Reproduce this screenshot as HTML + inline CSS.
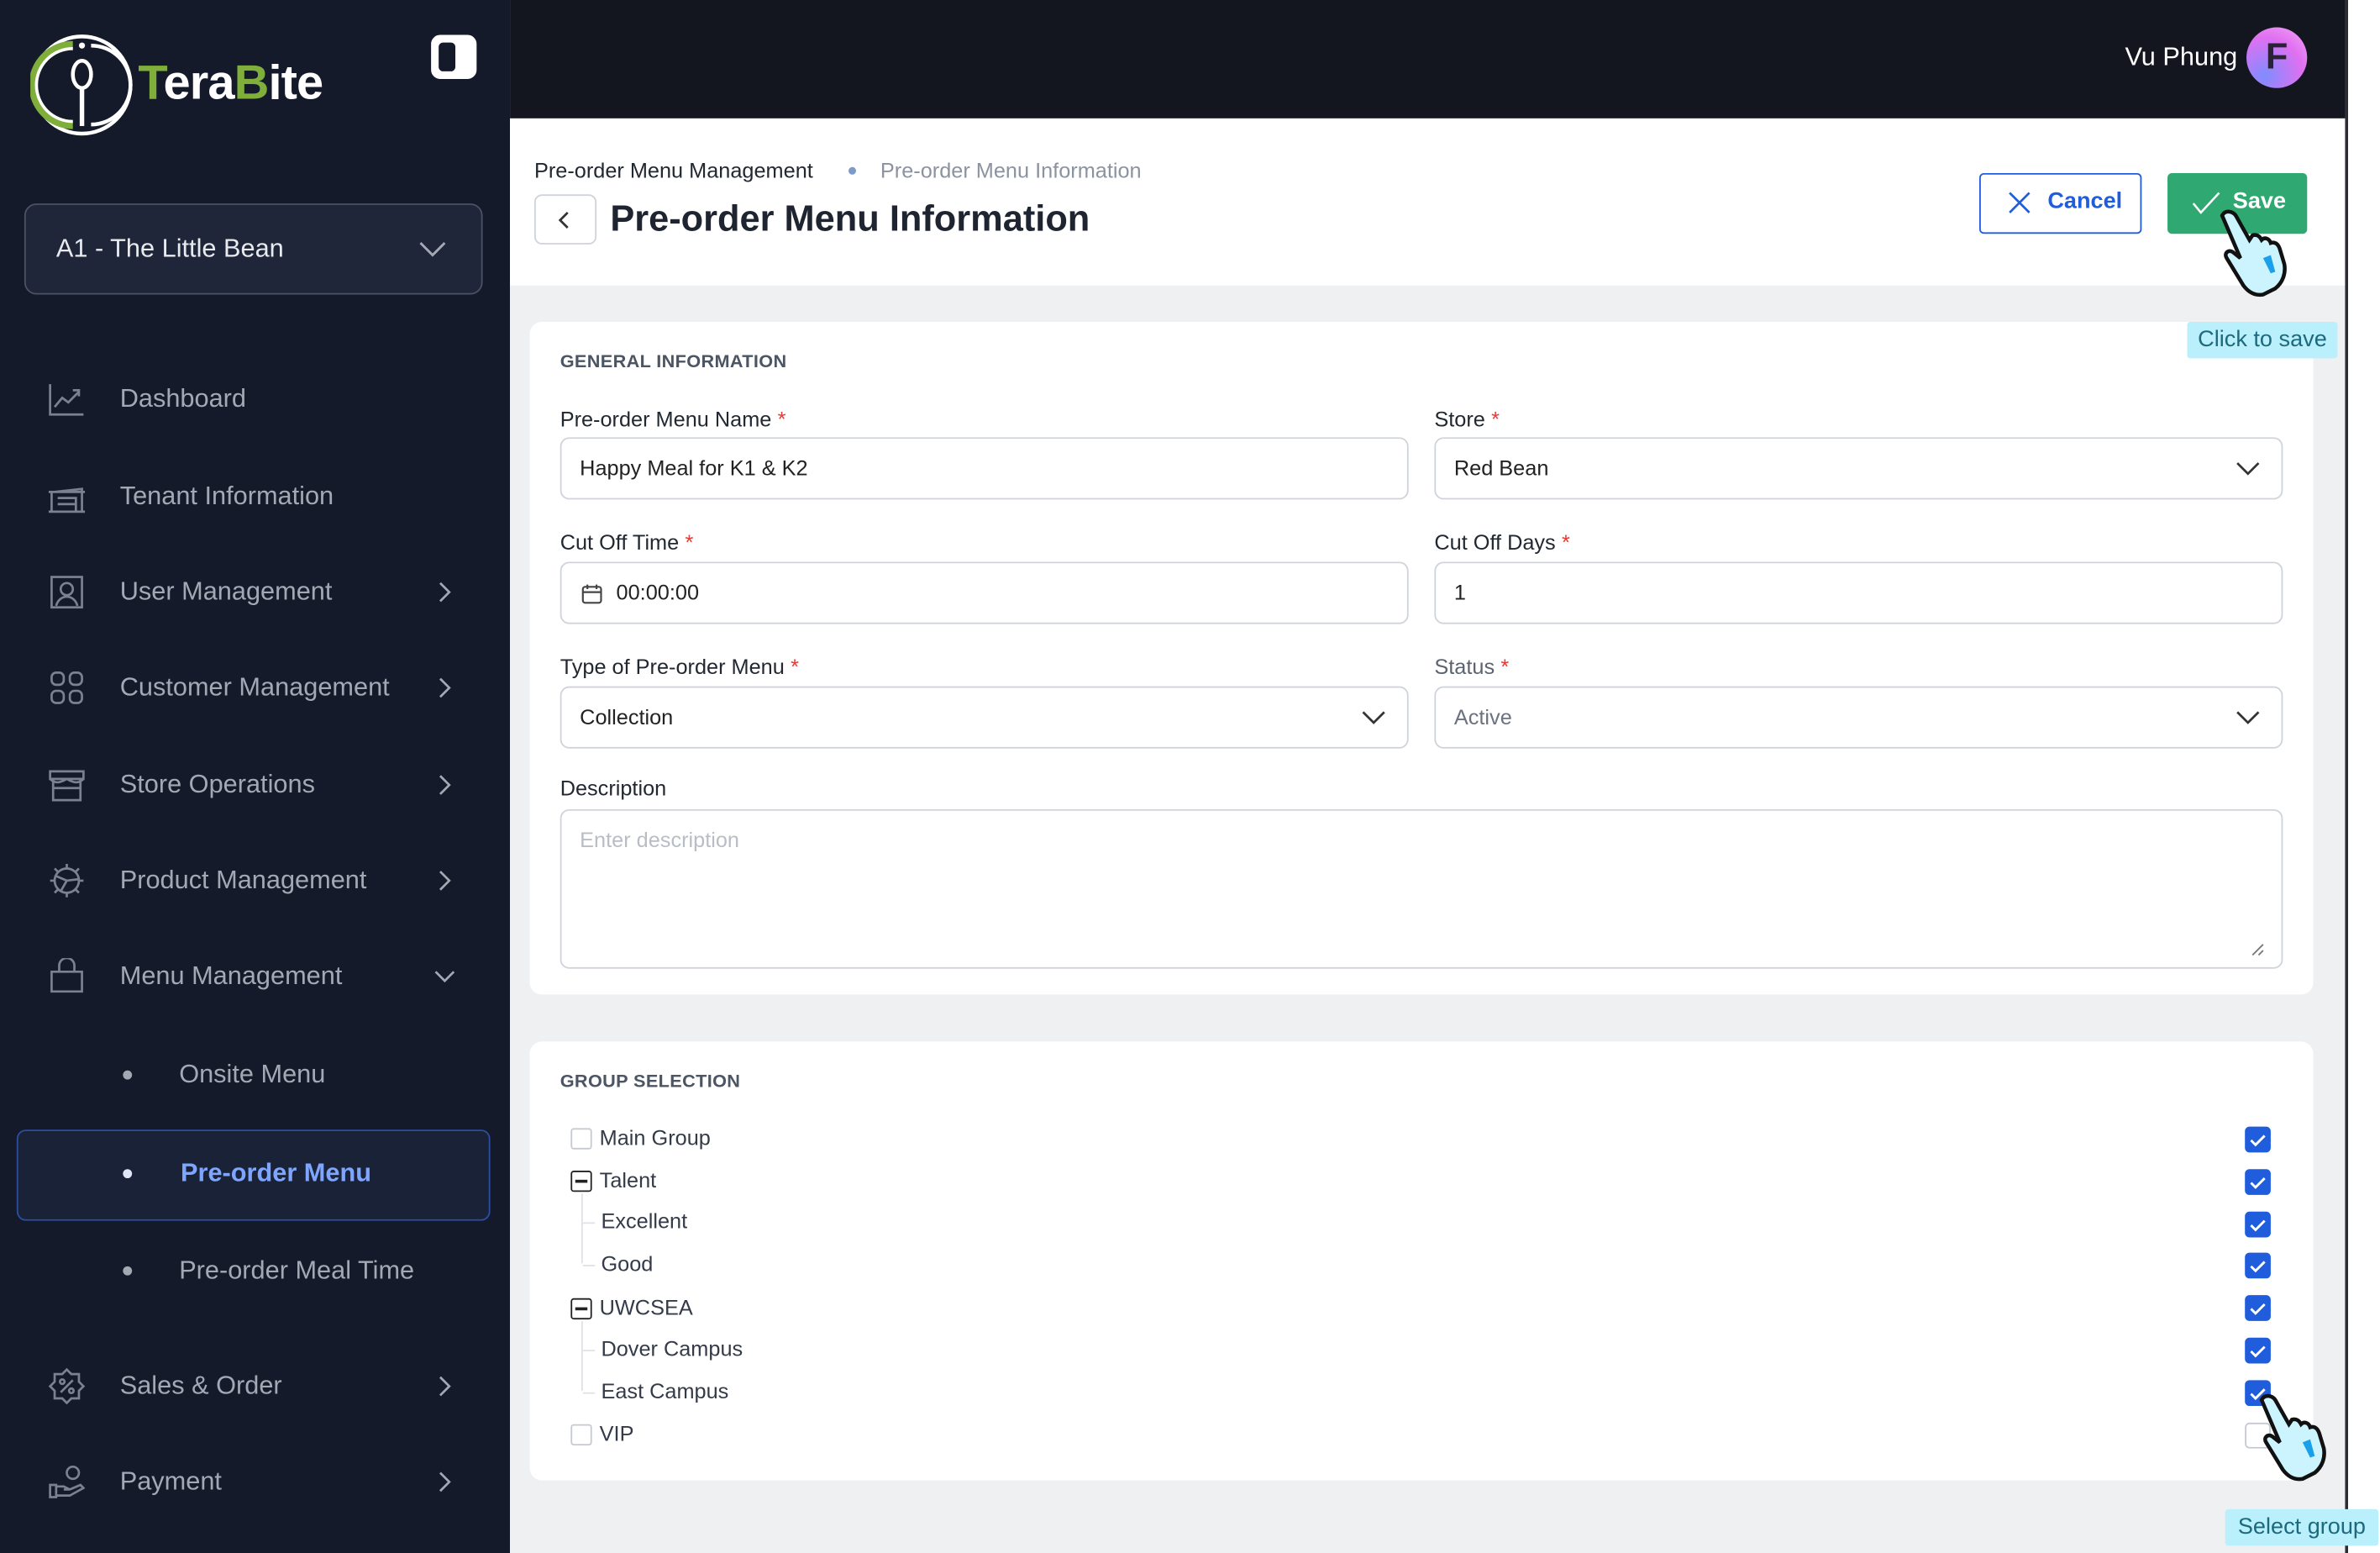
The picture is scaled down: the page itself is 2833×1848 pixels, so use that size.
<!DOCTYPE html>
<html><head><meta charset="utf-8"><style>
*{box-sizing:border-box;margin:0;padding:0}
html,body{width:2833px;height:1848px;overflow:hidden;background:#fff}
#w{position:absolute;left:0;top:0;width:1568px;height:1023px;transform:scale(1.80676);transform-origin:0 0;font-family:"Liberation Sans",sans-serif}
.a{position:absolute}
.side{left:0;top:0;width:336px;height:1023px;background:#151a2b}
.nav{position:absolute;left:79px;font-size:17px;color:#a3a9b4;transform:translateY(-50%)}
.ic{position:absolute;left:32px;width:24px;height:24px;transform:translateY(-50%)}
.chev{position:absolute;left:286px;width:14px;height:14px;transform:translateY(-50%)}
.dot{position:absolute;left:81px;width:6px;height:6px;border-radius:3px;background:#a3a9b4}
.lbl{position:absolute;font-size:14px;color:#222831}
.lbl b{color:#e53935;font-weight:normal;margin-left:4px}
.inp{position:absolute;height:41px;border:1px solid #cfd3da;border-radius:6px;font-size:14px;color:#222;padding-left:12px;line-height:39px;background:#fff}
.card{position:absolute;left:349px;width:1175px;background:#fff;border-radius:8px}
.ht{position:absolute;font-size:12px;font-weight:bold;color:#4b5563;letter-spacing:.2px}
.tr{position:absolute;font-size:14px;color:#333b48}
.cb{position:absolute;left:376px;width:14px;height:14px;border:1px solid #c5cad2;border-radius:2px;background:#fff}
.cm{position:absolute;left:376px;width:14px;height:14px;border:1.5px solid #222;border-radius:2px}
.cm:after{content:"";position:absolute;left:2px;right:2px;top:5px;height:1.5px;background:#222}
.ck{position:absolute;left:1479px;width:17px;height:17px;border-radius:3px;background:#1f5ddc}
.vl{position:absolute;left:383px;width:1px;background:#dfe2e7}
.hl{position:absolute;left:384px;width:8px;height:1px;background:#dfe2e7}
</style></head><body><div id="w">
<div class="a side"></div>
<!-- logo -->
<svg class="a" style="left:20px;top:22px" width="70" height="68" viewBox="0 0 70 68">
<circle cx="34" cy="34" r="32" fill="none" stroke="#fff" stroke-width="2.5"/>
<path d="M28 8 A26 26 0 0 0 28 60" fill="none" stroke="#7fae3a" stroke-width="6"/>
<path d="M40 8 A26 26 0 0 1 40 60" fill="none" stroke="#fff" stroke-width="2.5"/>
<path d="M28 10 A24 24 0 0 0 28 58" fill="none" stroke="#fff" stroke-width="2"/>
<ellipse cx="34" cy="27" rx="6" ry="9" fill="none" stroke="#fff" stroke-width="2.5"/>
<rect x="32.5" y="35" width="3" height="26" fill="#fff"/>
<circle cx="34" cy="8" r="2" fill="#fff"/>
</svg>
<div class="a" style="left:91px;top:36px;font-size:32px;font-weight:bold;color:#fff;letter-spacing:-0.5px"><span style="color:#7fae3a">T</span>era<span style="color:#7fae3a">B</span>ite</div>
<div class="a" style="left:284px;top:23px;width:30px;height:29px;border:4px solid #fff;border-radius:6px;background:#fff"><div style="position:absolute;left:1px;top:1px;width:11px;height:19px;background:#151a2b;border-radius:3px"></div></div>
<div class="a" style="left:16px;top:134px;width:302px;height:60px;border:1px solid #4a5264;border-radius:8px;background:#20263a"></div>
<div class="a" style="left:37px;top:154px;font-size:17px;color:#e8eaee">A1 - The Little Bean</div>
<svg class="a" style="left:275px;top:157px" width="20" height="14"><path d="M2 3l8 8 8-8" fill="none" stroke="#a3a9b4" stroke-width="1.6"/></svg>

<svg class="ic" style="top:263px" viewBox="0 0 24 24" fill="none" stroke="#7a8190" stroke-width="1.5"><path d="M1 2v20h22M4 17l5-6 4 3 7-7M16 6h4v4"/></svg>
<div class="nav" style="top:263px">Dashboard</div>
<svg class="ic" style="top:327px" viewBox="0 0 24 24" fill="none" stroke="#7a8190" stroke-width="1.5"><path d="M0 9h24M2 9v13h20V7L4 9M0 22h24M6 13h12v9M6 17h12"/></svg>
<div class="nav" style="top:327px">Tenant Information</div>
<svg class="ic" style="top:390px" viewBox="0 0 24 24" fill="none" stroke="#7a8190" stroke-width="1.5"><rect x="2" y="2" width="20" height="20"/><circle cx="12" cy="10" r="4"/><path d="M5 21c1-4 4-6 7-6s6 2 7 6"/></svg>
<div class="nav" style="top:390px">User Management</div>
<svg class="ic" style="top:453px" viewBox="0 0 24 24" fill="none" stroke="#7a8190" stroke-width="1.5"><rect x="2" y="2" width="8" height="8" rx="3"/><rect x="14" y="2" width="8" height="8" rx="3"/><rect x="2" y="14" width="8" height="8" rx="3"/><rect x="14" y="14" width="8" height="8" rx="3"/></svg>
<div class="nav" style="top:453px">Customer Management</div>
<svg class="ic" style="top:517px" viewBox="0 0 24 24" fill="none" stroke="#7a8190" stroke-width="1.5"><path d="M1 3h22v5H1zM3 8v14h18V8M1 8c3 3 6 3 11 0c5 3 8 3 11 0M3 14h18"/></svg>
<div class="nav" style="top:517px">Store Operations</div>
<svg class="ic" style="top:580px" viewBox="0 0 24 24" fill="none" stroke="#7a8190" stroke-width="1.5"><circle cx="12" cy="12" r="8"/><path d="M12 1v3M12 20v3M1 12h3M20 12h3M4 4l2 2M18 18l2 2M4 20l2-2M18 6l2-2M5 9l7 3 8-1M12 12l-4 7"/></svg>
<div class="nav" style="top:580px">Product Management</div>
<svg class="ic" style="top:643px" viewBox="0 0 24 24" fill="none" stroke="#7a8190" stroke-width="1.5"><path d="M2 9h20v13H2zM7 9V5a5 5 0 0 1 10 0v4"/></svg>
<div class="nav" style="top:643px">Menu Management</div>
<svg class="chev" style="top:390px" viewBox="0 0 14 14"><path d="M4 1l6 6-6 6" fill="none" stroke="#a3a9b4" stroke-width="1.5"/></svg>
<svg class="chev" style="top:453px" viewBox="0 0 14 14"><path d="M4 1l6 6-6 6" fill="none" stroke="#a3a9b4" stroke-width="1.5"/></svg>
<svg class="chev" style="top:517px" viewBox="0 0 14 14"><path d="M4 1l6 6-6 6" fill="none" stroke="#a3a9b4" stroke-width="1.5"/></svg>
<svg class="chev" style="top:580px" viewBox="0 0 14 14"><path d="M4 1l6 6-6 6" fill="none" stroke="#a3a9b4" stroke-width="1.5"/></svg>
<svg class="chev" style="top:643px" viewBox="0 0 14 14"><path d="M1 4l6 6 6-6" fill="none" stroke="#a3a9b4" stroke-width="1.5"/></svg>
<div class="dot" style="top:705px"></div><div class="nav" style="left:118px;top:708px">Onsite Menu</div>
<div class="a" style="left:11px;top:744px;width:312px;height:60px;border:1px solid #2d4da0;border-radius:6px;background:#1a2238"></div>
<div class="dot" style="top:770px;background:#dfe6f5"></div><div class="nav" style="left:119px;top:773px;color:#7ea6ff;font-weight:bold">Pre-order Menu</div>
<div class="dot" style="top:834px"></div><div class="nav" style="left:118px;top:837px">Pre-order Meal Time</div>
<svg class="ic" style="top:913px" viewBox="0 0 24 24" fill="none" stroke="#7a8190" stroke-width="1.5"><path d="M12 1l3 3h5v5l3 3-3 3v5h-5l-3 3-3-3H4v-5l-3-3 3-3V4h5z"/><path d="M8 16l8-8"/><circle cx="9" cy="9" r="1.5"/><circle cx="15" cy="15" r="1.5"/></svg>
<div class="nav" style="top:913px">Sales &amp; Order</div>
<svg class="ic" style="top:976px" viewBox="0 0 24 24" fill="none" stroke="#7a8190" stroke-width="1.5"><path d="M1 14h4v8H1zM5 15h5l4 2h-4M5 21h9l9-5-2-2-7 3"/><circle cx="16" cy="6" r="4"/></svg>
<div class="nav" style="top:976px">Payment</div>
<svg class="chev" style="top:913px" viewBox="0 0 14 14"><path d="M4 1l6 6-6 6" fill="none" stroke="#a3a9b4" stroke-width="1.5"/></svg>
<svg class="chev" style="top:976px" viewBox="0 0 14 14"><path d="M4 1l6 6-6 6" fill="none" stroke="#a3a9b4" stroke-width="1.5"/></svg>

<!-- top bar -->
<div class="a" style="left:336px;top:0;width:1209px;height:78px;background:#13161f"></div>
<div class="a" style="left:1400px;top:28px;font-size:17px;color:#fff">Vu Phung</div>
<div class="a" style="left:1480px;top:18px;width:40px;height:40px;border-radius:20px;background:radial-gradient(circle at 30% 80%,#7f8cff,#e070f0 60%,#f4a8f8);font-size:24px;color:#2a2236;text-align:center;line-height:40px;font-weight:bold">F</div>

<!-- main -->
<div class="a" style="left:336px;top:78px;width:1209px;height:945px;background:#eff0f2"></div>
<div class="a" style="left:336px;top:78px;width:1209px;height:110px;background:#fff"></div>
<div class="a" style="left:1545px;top:0;width:2px;height:1023px;background:#2b2d33"></div>
<div class="a" style="left:1547px;top:0;width:21px;height:1023px;background:#fff"></div>
<div class="a" style="left:352px;top:104px;font-size:14px;color:#222831">Pre-order Menu Management</div>
<div class="a" style="left:559px;top:110px;width:5px;height:5px;border-radius:3px;background:#7e9ac8"></div>
<div class="a" style="left:580px;top:104px;font-size:14px;color:#8c93a0">Pre-order Menu Information</div>
<div class="a" style="left:352px;top:128px;width:41px;height:33px;border:1px solid #cfd3da;border-radius:5px"></div>
<svg class="a" style="left:366px;top:138px" width="12" height="14"><path d="M8 2l-5 5 5 5" fill="none" stroke="#333" stroke-width="1.5"/></svg>
<div class="a" style="left:402px;top:131px;font-size:24px;font-weight:bold;color:#1f2530">Pre-order Menu Information</div>
<div class="a" style="left:1304px;top:114px;width:107px;height:40px;border:1.5px solid #1f5ddc;border-radius:3px"></div>
<svg class="a" style="left:1323px;top:126px" width="15" height="15"><path d="M1 1l13 13M14 1L1 14" stroke="#1f5ddc" stroke-width="1.5"/></svg>
<div class="a" style="left:1349px;top:124px;font-size:15px;font-weight:bold;color:#1f5ddc">Cancel</div>
<div class="a" style="left:1428px;top:114px;width:92px;height:40px;background:#30a872;border-radius:3px"></div>
<svg class="a" style="left:1444px;top:125px" width="20" height="18"><path d="M1 9l5 6L18 2" fill="none" stroke="#fff" stroke-width="1.4"/></svg>
<div class="a" style="left:1471px;top:124px;font-size:15px;font-weight:bold;color:#fff">Save</div>

<!-- card 1 -->
<div class="card" style="top:212px;height:443px"></div>
<div class="ht" style="left:369px;top:231px">GENERAL INFORMATION</div>
<div class="lbl" style="left:369px;top:268px">Pre-order Menu Name<b>*</b></div>
<div class="lbl" style="left:945px;top:268px">Store<b>*</b></div>
<div class="inp" style="left:369px;top:288px;width:559px">Happy Meal for K1 &amp; K2</div>
<div class="inp" style="left:945px;top:288px;width:559px">Red Bean</div>
<div class="lbl" style="left:369px;top:349px">Cut Off Time<b>*</b></div>
<div class="lbl" style="left:945px;top:349px">Cut Off Days<b>*</b></div>
<div class="inp" style="left:369px;top:370px;width:559px;padding-left:36px">00:00:00</div>
<svg class="a" style="left:383px;top:384px" width="14" height="14" viewBox="0 0 14 14" fill="none" stroke="#444" stroke-width="1.2"><rect x="1" y="2.5" width="12" height="10.5" rx="1.5"/><path d="M1 6h12M4 1v3M10 1v3"/></svg>
<div class="inp" style="left:945px;top:370px;width:559px">1</div>
<div class="lbl" style="left:369px;top:431px">Type of Pre-order Menu<b>*</b></div>
<div class="lbl" style="left:945px;top:431px;color:#5c6370">Status<b>*</b></div>
<div class="inp" style="left:369px;top:452px;width:559px">Collection</div>
<div class="inp" style="left:945px;top:452px;width:559px;color:#6b7280">Active</div>
<svg class="a" style="left:896px;top:466px" width="18" height="14"><path d="M2 3l7 7 7-7" fill="none" stroke="#333" stroke-width="1.5"/></svg>
<svg class="a" style="left:1472px;top:302px" width="18" height="14"><path d="M2 3l7 7 7-7" fill="none" stroke="#333" stroke-width="1.5"/></svg>
<svg class="a" style="left:1472px;top:466px" width="18" height="14"><path d="M2 3l7 7 7-7" fill="none" stroke="#333" stroke-width="1.5"/></svg>
<div class="lbl" style="left:369px;top:511px">Description</div>
<div class="inp" style="left:369px;top:533px;width:1135px;height:105px;line-height:38px;color:#b8bdc6">Enter description</div>
<svg class="a" style="left:1482px;top:620px" width="10" height="10"><path d="M9 2L2 9M9 6L6 9" stroke="#777" stroke-width="1"/></svg>

<!-- card 2 -->
<div class="card" style="top:686px;height:289px"></div>
<div class="ht" style="left:369px;top:705px">GROUP SELECTION</div>
<div class="cb" style="top:743px"></div><div class="tr" style="left:395px;top:741px">Main Group</div>
<div class="cm" style="top:771px"></div><div class="tr" style="left:395px;top:769px">Talent</div>
<div class="vl" style="top:786px;height:46px"></div><div class="hl" style="top:805px"></div><div class="hl" style="top:833px"></div>
<div class="tr" style="left:396px;top:796px">Excellent</div>
<div class="tr" style="left:396px;top:824px">Good</div>
<div class="cm" style="top:855px"></div><div class="tr" style="left:395px;top:853px">UWCSEA</div>
<div class="vl" style="top:870px;height:46px"></div><div class="hl" style="top:889px"></div><div class="hl" style="top:917px"></div>
<div class="tr" style="left:396px;top:880px">Dover Campus</div>
<div class="tr" style="left:396px;top:908px">East Campus</div>
<div class="cb" style="top:938px"></div><div class="tr" style="left:395px;top:936px">VIP</div>

<div class="ck" style="top:742px"></div><div class="ck" style="top:770px"></div><div class="ck" style="top:798px"></div><div class="ck" style="top:825px"></div><div class="ck" style="top:853px"></div><div class="ck" style="top:881px"></div><div class="ck" style="top:909px"></div>
<div class="a" style="left:1479px;top:937px;width:17px;height:17px;border:1px solid #c5cad2;border-radius:3px;background:#fff"></div>
<svg class="a" style="left:1479px;top:742px" width="17" height="195"><g fill="none" stroke="#fff" stroke-width="1.6"><path d="M4 9l3 3 6-6"/><path transform="translate(0,28)" d="M4 9l3 3 6-6"/><path transform="translate(0,56)" d="M4 9l3 3 6-6"/><path transform="translate(0,83)" d="M4 9l3 3 6-6"/><path transform="translate(0,111)" d="M4 9l3 3 6-6"/><path transform="translate(0,139)" d="M4 9l3 3 6-6"/><path transform="translate(0,167)" d="M4 9l3 3 6-6"/></g></svg>

<!-- cursors -->
<svg class="a" style="left:1458px;top:132px" width="60" height="64" viewBox="0 0 60 64"><path d="M6 10c2-4 7-3 9 0l9 16 2-3c3-1 5 1 6 3 2-2 5-1 6 2 3-1 5 1 6 4l3 10c1 6-1 12-6 16l-8 4c-6 1-10-2-13-6L9 38c-2-3 1-6 4-4l5 4z" fill="#cbf4ff" stroke="#111" stroke-width="2.5"/><path d="M33 38l5-2 3 11-3 1z" fill="#1aa0ea"/></svg>
<svg class="a" style="left:1484px;top:912px" width="60" height="64" viewBox="0 0 60 64"><path d="M6 10c2-4 7-3 9 0l9 16 2-3c3-1 5 1 6 3 2-2 5-1 6 2 3-1 5 1 6 4l3 10c1 6-1 12-6 16l-8 4c-6 1-10-2-13-6L9 38c-2-3 1-6 4-4l5 4z" fill="#cbf4ff" stroke="#111" stroke-width="2.5"/><path d="M33 38l5-2 3 11-3 1z" fill="#1aa0ea"/></svg>
<div class="a" style="left:1441px;top:212px;width:99px;height:24px;background:#b9f0fb;border-radius:2px;font-size:15px;color:#1d6a7e;text-align:center;line-height:24px">Click to save</div>
<div class="a" style="left:1466px;top:994px;width:101px;height:24px;background:#b9f0fb;border-radius:2px;font-size:15px;color:#1d6a7e;text-align:center;line-height:24px">Select group</div>
</div></body></html>
